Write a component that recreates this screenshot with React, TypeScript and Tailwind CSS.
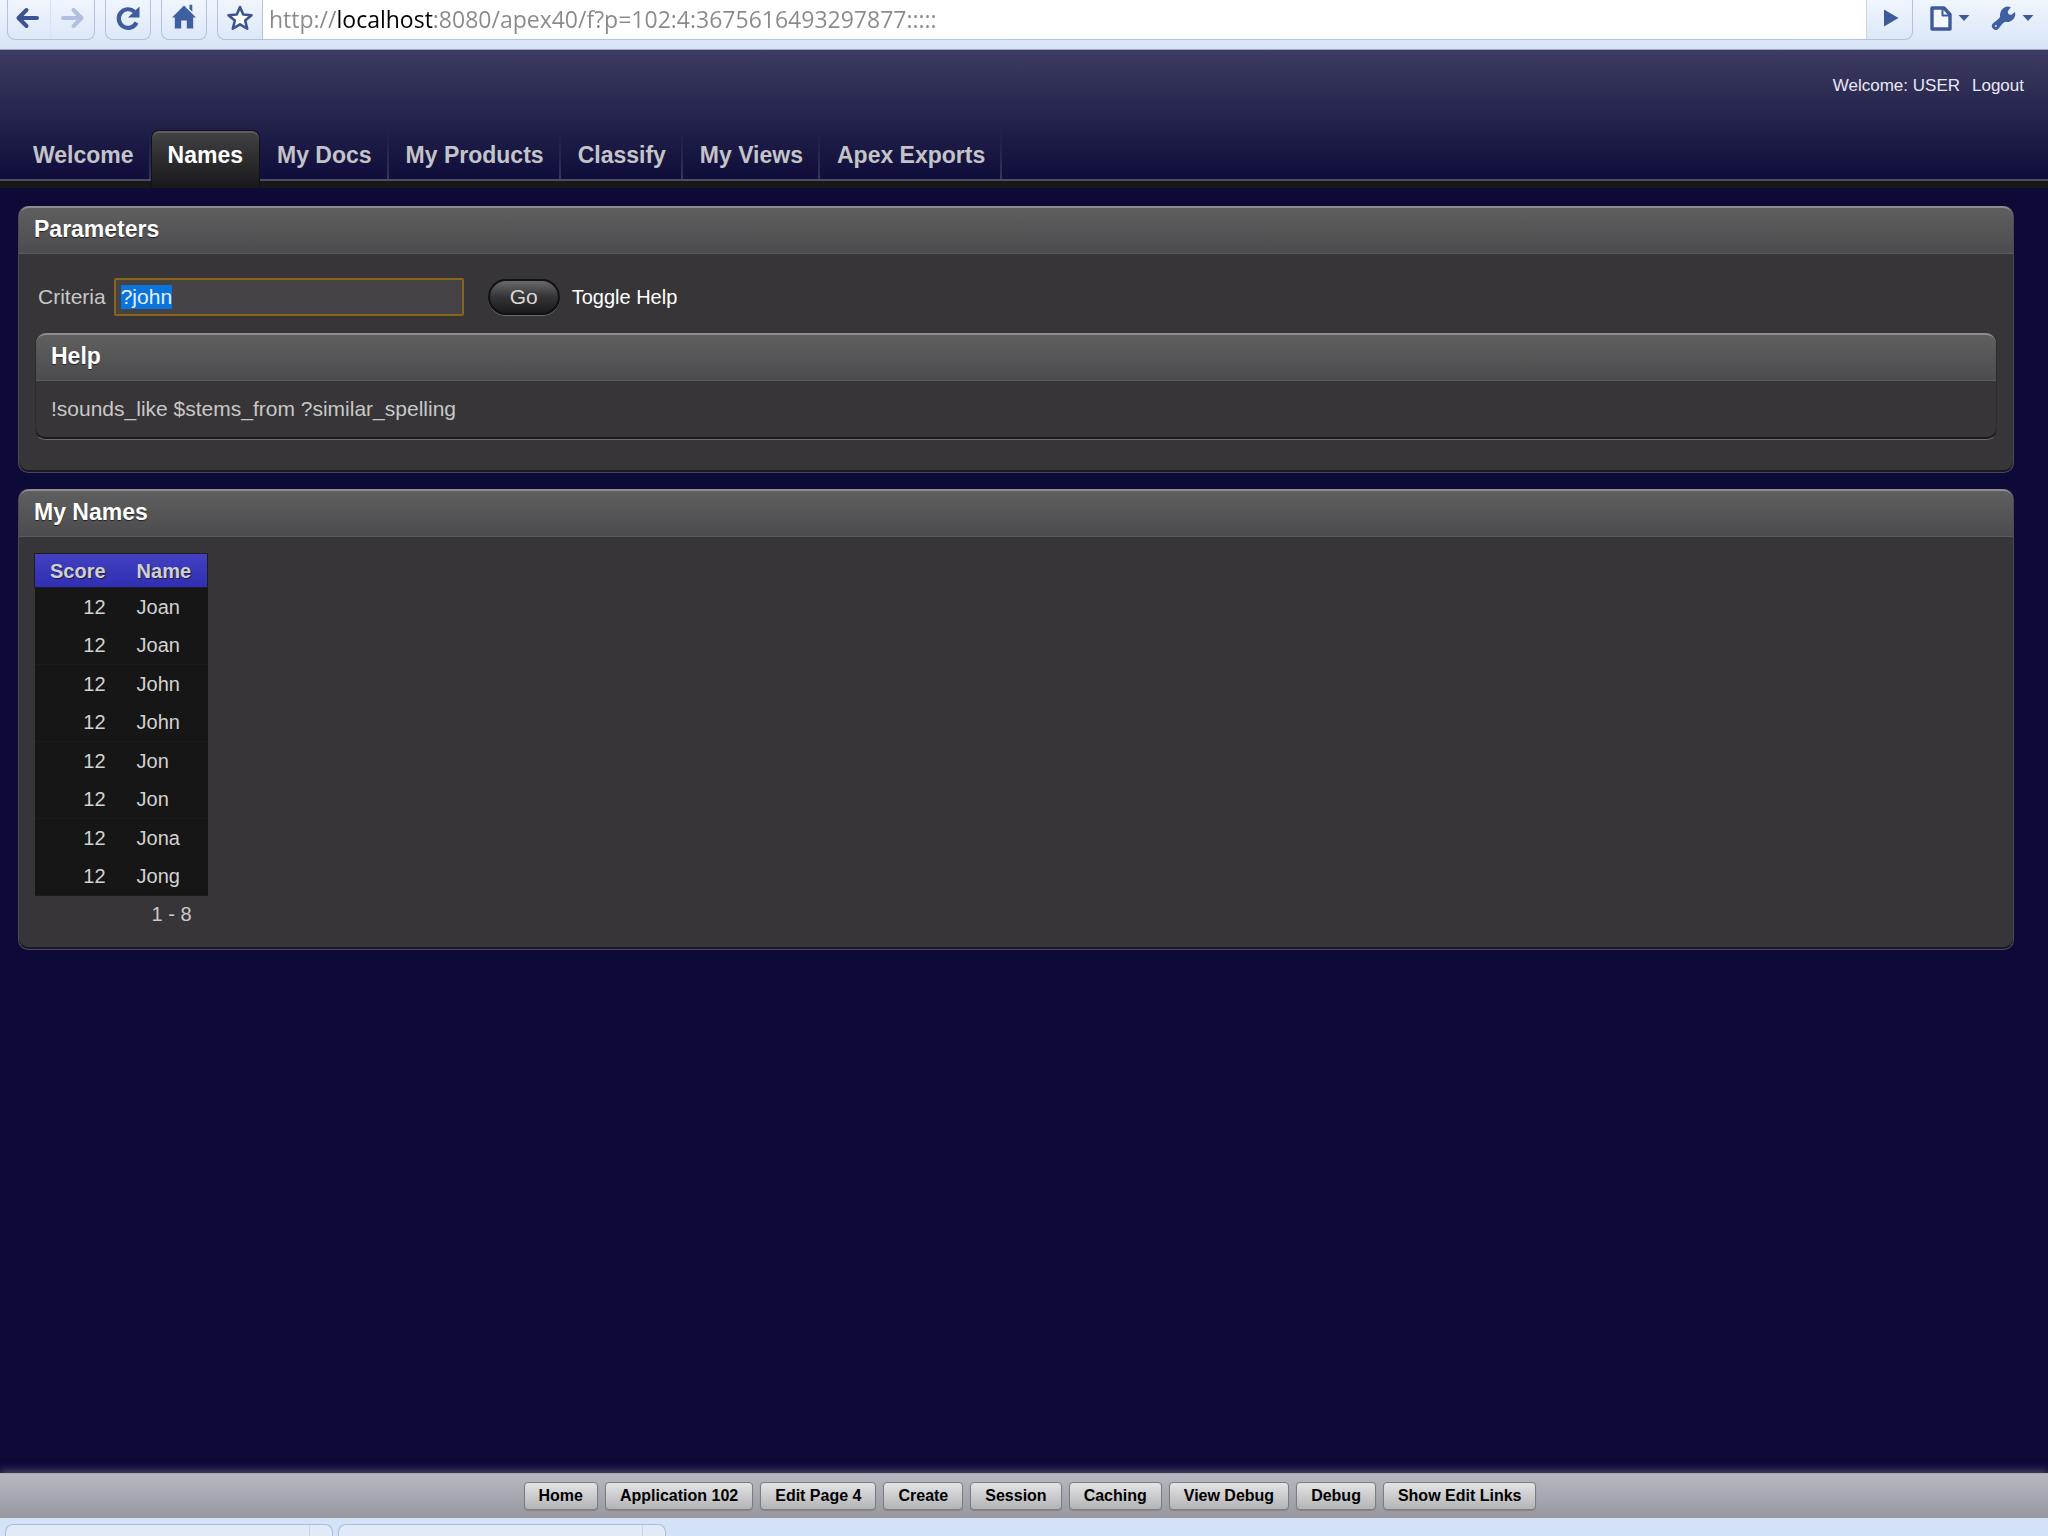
import React, { useEffect, useRef, useState } from 'react';

const tabs = ['Welcome', 'Names', 'My Docs', 'My Products', 'Classify', 'My Views', 'Apex Exports'];

const rows = [
  { score: 12, name: 'Joan' },
  { score: 12, name: 'Joan' },
  { score: 12, name: 'John' },
  { score: 12, name: 'John' },
  { score: 12, name: 'Jon' },
  { score: 12, name: 'Jon' },
  { score: 12, name: 'Jona' },
  { score: 12, name: 'Jong' },
];

const devLinks = [
  'Home',
  'Application 102',
  'Edit Page 4',
  'Create',
  'Session',
  'Caching',
  'View Debug',
  'Debug',
  'Show Edit Links',
];

const Caret = () => (
  <svg className="w-3 h-2" viewBox="0 0 12 8">
    <path d="M0.5 1h11L6 7z" fill="#3d5a9b" />
  </svg>
);

const BrowserBar: React.FC = () => (
  <div className="flex items-start h-[50px] pl-[7px] pr-[14px] bg-gradient-to-b from-[#f1f6fe] to-[#d7e4f6] border-b border-[#9aa5b8]">
    <div className="flex h-10 border border-t-0 border-[#b3c3de] rounded-b-lg">
      <button type="button" aria-label="Back" className="flex justify-center w-[43px] h-full pt-[6px] pr-1 border-r border-[#d9e3f2]">
        <svg className="w-6 h-6" viewBox="0 0 24 24" fill="none" stroke="#3b5390" strokeWidth="4" strokeLinecap="round" strokeLinejoin="round">
          <path d="M11.500 4L3.500 12L11.500 20M4.500 12H22" />
        </svg>
      </button>
      <button type="button" aria-label="Forward" className="flex justify-center w-[43px] h-full pt-[6px]">
        <svg className="w-6 h-6" viewBox="0 0 24 24" fill="none" stroke="#b0bfe0" strokeWidth="4" strokeLinecap="round" strokeLinejoin="round">
          <path d="M12.500 4L20.500 12L12.500 20M19.500 12H2" />
        </svg>
      </button>
    </div>
    <button type="button" aria-label="Reload" className="flex justify-center w-[46px] h-10 pt-1 ml-[10px] border border-t-0 border-[#b3c3de] rounded-b-lg">
      <svg className="w-7 h-7" viewBox="0 0 28 28">
        <path d="M22.500 18.500A9.300 9.300 0 1 1 20.500 7.800" fill="none" stroke="#3f5c9c" strokeWidth="4.200" />
        <path d="M25.500 2.500V13.500H14z" fill="#3f5c9c" />
      </svg>
    </button>
    <button type="button" aria-label="Home" className="flex justify-center w-[46px] h-10 pt-1 ml-[10px] border border-t-0 border-[#b3c3de] rounded-b-lg">
      <svg className="w-[26px] h-[26px]" viewBox="0 0 26 26" fill="#3f5fa3">
        <path d="M13 1.500L1 13.500h2.800V24.500h6.400v-8h5.600v8h6.400V13.500H25z" />
        <path d="M18.500 0.800h2.800v7L18.500 5z" />
      </svg>
    </button>
    <div className="flex flex-1 h-10 ml-[10px] border border-t-0 border-[#b3c3de] rounded-b-lg">
      <button type="button" aria-label="Bookmark this page" className="flex justify-center w-[45px] h-full pt-1 border-r border-[#b3c3de]">
        <svg className="w-7 h-7" viewBox="0 0 28 28">
          <path
            d="M14 3L17.200 10.500L25.500 11.200L19.200 16.600L21.200 24.700L14 20.300L6.800 24.700L8.800 16.600L2.500 11.200L10.800 10.500z"
            fill="#fff"
            stroke="#3d5592"
            strokeWidth="2.600"
            strokeLinejoin="round"
          />
        </svg>
      </button>
      {/* host name is darker than the rest of the address */}
      <input
        type="text"
        aria-label="Address"
        defaultValue="http://localhost:8080/apex40/f?p=102:4:3675616493297877:::::"
        spellCheck={false}
        className="flex-1 h-full px-[6px] pb-[2px] outline-none text-[23px] text-transparent caret-black bg-[linear-gradient(90deg,#8a8a8a_73px,#000_73px,#000_170px,#8a8a8a_170px),linear-gradient(#fff,#fff)] [background-clip:text,border-box] font-['Open_Sans',sans-serif]"
      />
      <button type="button" aria-label="Go to address" className="flex justify-center w-[46px] h-full pt-[9px] pl-[3px] border-l border-[#c9d3e4]">
        <svg className="w-4 h-[18px]" viewBox="0 0 16 18">
          <path d="M1 0.500L15.500 9L1 17.500z" fill="#3d5a9b" />
        </svg>
      </button>
    </div>
    <button type="button" aria-label="Page menu" className="flex items-center gap-[6px] h-9 ml-[17px]">
      <svg className="w-[22px] h-[25px]" viewBox="0 0 22 25" fill="none" stroke="#3d5a9b" strokeWidth="3.400" strokeLinejoin="round">
        <path d="M2 2h12L20 8.500V23H2z" fill="#f4f8fe" />
        <path d="M12.500 2.500V9.500H19.500" strokeWidth="2" />
      </svg>
      <Caret />
    </button>
    <button type="button" aria-label="Tools menu" className="flex items-center gap-[6px] h-9 ml-[21px]">
      <svg className="w-[25px] h-[25px]" viewBox="0 0 25 25">
        <path
          d="M19.800 1.200L16.800 5.200L17.300 8L20 9L24 6A8 8 0 0 1 14.500 15.800C12.500 16.200 10.500 18.500 7.500 22.800A3.900 3.900 0 0 1 1.800 17.500C6 14 8.500 12.500 9.200 10.500A8 8 0 0 1 19.800 1.200z"
          fill="#3f5fa3"
        />
        <circle cx="4.800" cy="20" r="1" fill="#dbe6f7" />
      </svg>
      <Caret />
    </button>
  </div>
);

interface RegionProps {
  title: string;
  nested?: boolean;
  children: React.ReactNode;
}

const Region: React.FC<RegionProps> = ({ title, nested, children }) => (
  <section
    className={`rounded-[10px] bg-[#373537] border border-t-0 shadow-[inset_0_-2px_0_#1a1a1e] ${
      nested ? 'border-x-[#2c2b2d] border-b-[#6a696b]' : 'border-x-[#4a4a58] border-b-[#45446b]'
    }`}
  >
    <h2 className="flex items-center h-12 px-[15px] pb-[3px] rounded-t-[10px] border-t-2 border-t-[#8e8d90] border-b border-b-[#5a595b] bg-gradient-to-b from-[#5f5f60] to-[#4c4b4d] text-[23px] leading-none font-bold text-white [text-shadow:0_1px_1px_#222]">
      {title}
    </h2>
    {children}
  </section>
);

const App: React.FC = () => {
  const [criteria, setCriteria] = useState('?john');
  const [showHelp, setShowHelp] = useState(true);
  const criteriaRef = useRef<HTMLInputElement>(null);

  useEffect(() => {
    criteriaRef.current?.focus();
    criteriaRef.current?.select();
  }, []);

  return (
    <div className="flex flex-col min-h-screen bg-[#0d0a38] text-[#c8c8c8] text-xl font-['Liberation_Sans',Arial,sans-serif]">
      <BrowserBar />

      <header className="flex flex-col bg-gradient-to-b from-[#3d3b60] to-[#0d0a38]">
        <div className="flex justify-end gap-3 h-20 pt-[26px] pr-6 text-[17px] leading-5 text-[#e8e8f2]">
          <span>Welcome: USER</span>
          <a href="#logout">Logout</a>
        </div>
        <nav className="flex items-end border-b-[7px] border-[#18181a]">
          <div className="w-4 border-b-2 border-[#4d4b66]" />
          {tabs.map((tab) =>
            tab === 'Names' ? (
              <a
                key={tab}
                href="#names"
                aria-current="page"
                className="flex items-center h-[58px] -mb-[7px] px-4 pb-[9px] rounded-t-lg border border-b-0 border-[#121216] bg-gradient-to-b from-[#434345] to-[#18181a] shadow-[inset_0_2px_0_#5d5d60] text-[23px] leading-7 font-bold text-white"
              >
                {tab}
              </a>
            ) : (
              <a
                key={tab}
                href="#tab"
                className="flex items-center h-[51px] px-[17px] border-b-2 border-[#4d4b66] bg-[linear-gradient(to_bottom,transparent,#37355f)] bg-size-[2px_100%] bg-right bg-no-repeat text-[23px] leading-7 font-bold text-[#c4c4c8]"
              >
                {tab}
              </a>
            )
          )}
          <div className="flex-1 border-b-2 border-[#4d4b66]" />
        </nav>
      </header>

      <main className="flex flex-col flex-1 gap-4 pt-[18px] pl-[18px] pr-[34px]">
        <Region title="Parameters">
          <div className="px-4 pt-[23px] pb-8">
            <form className="flex items-center h-10" onSubmit={(e) => e.preventDefault()}>
              <label htmlFor="criteria" className="pl-[3px] text-[21px]">
                Criteria
              </label>
              <input
                id="criteria"
                ref={criteriaRef}
                type="text"
                value={criteria}
                onChange={(e) => setCriteria(e.target.value)}
                className="w-[350px] h-[38px] ml-2 px-[5px] border-2 border-[#8a6518] rounded-xs bg-[#454346] outline-none text-[21px] text-[#d8d8d8] selection:bg-[#0b74dc] selection:text-[#e8f0ff]"
              />
              <button
                type="submit"
                className="w-[72px] h-9 ml-6 pb-[2px] rounded-full border-2 border-[#111] bg-gradient-to-b from-[#6a696b] via-[#343335] to-[#1b1a1c] shadow-[0_1px_0_#6a696b] text-[21px] leading-none text-[#d8d8d8]"
              >
                Go
              </button>
              <button type="button" onClick={() => setShowHelp(!showHelp)} className="ml-3 text-xl text-white">
                Toggle Help
              </button>
            </form>
            {showHelp && (
              <div className="pt-4">
                <Region title="Help" nested>
                  <p className="px-[15px] pt-[14px] pb-4 text-[21px] leading-7">
                    !sounds_like $stems_from ?similar_spelling
                  </p>
                </Region>
              </div>
            )}
          </div>
        </Region>

        <Region title="My Names">
          <div className="px-[15px] pt-4 pb-[23px]">
            <table className="border-collapse leading-6">
              <thead className="border border-[#1c1c24]">
                <tr className="h-[34px] bg-gradient-to-b from-[#4341c0] to-[#2f2db4] font-bold text-[#cfcfdc] [text-shadow:1px_1px_1px_#222]">
                  <th className="px-[15px] text-left">Score</th>
                  <th className="px-4 text-left">Name</th>
                </tr>
              </thead>
              <tbody className="bg-[#161617] text-[#d2d2d2]">
                {rows.map((row, idx) => (
                  <tr key={idx} className="even:border-b border-[#1c1c1d]">
                    <td className="px-[15px] py-[7px] text-right">{row.score}</td>
                    <td className="px-4 py-[7px]">{row.name}</td>
                  </tr>
                ))}
              </tbody>
              <tfoot>
                <tr>
                  <td colSpan={2} className="px-4 pt-[6px] text-right">
                    1 - 8
                  </td>
                </tr>
              </tfoot>
            </table>
          </div>
        </Region>
      </main>

      <div className="flex justify-center gap-[7px] pl-7 pr-4 py-2 border-t border-[#a9a9ae] bg-gradient-to-b from-[#b6b7c0] to-[#98999f] shadow-[0_-2px_8px_#55546c]">
        {devLinks.map((link) => (
          <button
            key={link}
            type="button"
            className="h-7 px-[14px] rounded border border-[#7d7d80] bg-gradient-to-b from-[#e3e4e5] to-[#b4b4b6] shadow-[0_1px_1px_#85858a] text-base leading-none font-bold text-black"
          >
            {link}
          </button>
        ))}
      </div>

      <div className="relative flex gap-[5px] h-[18px] pt-[6px] pl-[5px] bg-[#d3e2f6]">
        <div className="flex justify-end w-[328px] pr-[22px] rounded-t-lg border border-b-0 border-[#abbdd8] bg-[#e1ebf8]">
          <div className="border-l border-[#c6d4e8]" />
        </div>
        <div className="flex justify-end w-[328px] pr-[22px] rounded-t-lg border border-b-0 border-[#abbdd8] bg-[#e1ebf8]">
          <div className="border-l border-[#c6d4e8]" />
        </div>
      </div>
    </div>
  );
};

export default App;
